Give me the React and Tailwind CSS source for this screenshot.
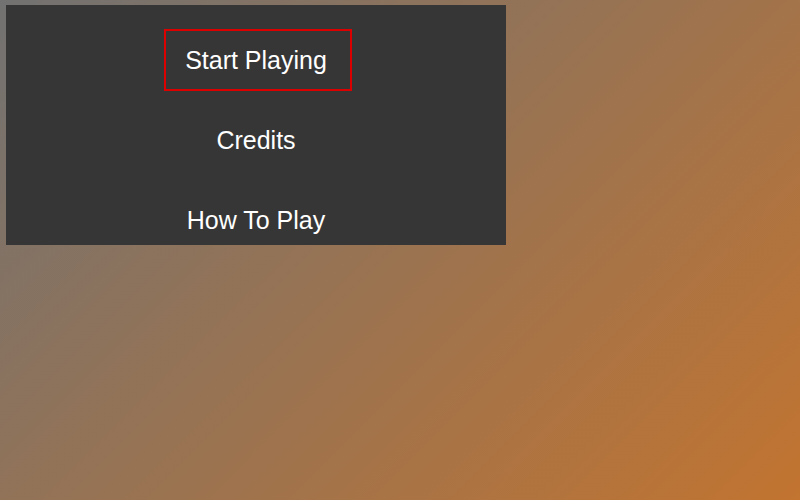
export default function App() {
  const items = ["Start Playing", "Credits", "How To Play"];
  return (
    <div
      className="w-[800px] h-[500px] bg-[linear-gradient(135deg,#727272,#c27430)] pt-[5px] pl-[6px]"
      style={{ fontFamily: '"Liberation Sans", Arial, sans-serif' }}
    >
      <div className="w-[500px] h-[240px] bg-[#363636] overflow-hidden pt-[15px] flex flex-col">
        {items.map((t, i) => (
          <div key={t} className="h-[80px] shrink-0 flex items-center justify-center">
            {i === 0 ? (
              <button className="ml-[4px] text-white text-[25px] leading-[28px] pl-[19px] pr-[23px] py-[15px] border-2 border-[#dd0000]">
                {t}
              </button>
            ) : (
              <button className="text-white text-[25px] leading-[28px] px-[21px] py-[15px] border-2 border-transparent">
                {t}
              </button>
            )}
          </div>
        ))}
      </div>
    </div>
  );
}
